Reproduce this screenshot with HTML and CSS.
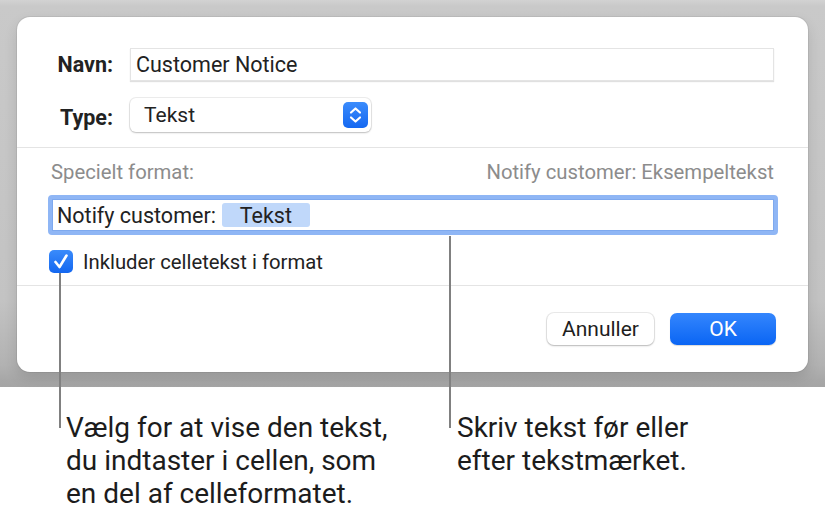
FILE: index.html
```html
<!DOCTYPE html>
<html lang="da">
<head>
<meta charset="utf-8">
<title>Celleformat</title>
<link rel="stylesheet" href="styles.css">
</head>
<body>
<div class="stage">
  <div class="dialog">
    <div class="top">
      <span class="lbl">Navn:</span>
      <div class="input">Customer Notice</div>
      <span class="lbl lbl-type">Type:</span>
      <div class="popup">
        <span>Tekst</span>
        <span class="stepper">
          <svg width="25" height="26" viewBox="0 0 25 26"><path d="M8 10.5 L12.5 6.5 L17 10.5 M8 15.5 L12.5 19.5 L17 15.5" fill="none" stroke="#fff" stroke-width="2.2" stroke-linecap="round" stroke-linejoin="round"/></svg>
        </span>
      </div>
    </div>
    <div class="mid">
      <div class="fmt-head"><span>Specielt format:</span><span>Notify customer: Eksempeltekst</span></div>
      <div class="fmt-field">Notify customer:<span class="token">Tekst</span></div>
      <div class="check">
        <span class="box"><svg width="24" height="23" viewBox="0 0 24 23"><path d="M6.5 12 L10.5 17 L17.5 5.5" fill="none" stroke="#fff" stroke-width="2.6" stroke-linecap="round" stroke-linejoin="round"/></svg></span>
        <span>Inkluder celletekst i format</span>
      </div>
    </div>
    <div class="bottom">
      <button class="btn">Annuller</button>
      <button class="btn primary">OK</button>
    </div>
  </div>
</div>
<div class="captions">
  <p class="cap cap-left">Vælg for at vise den tekst,<br>du indtaster i cellen, som<br>en del af celleformatet.</p>
  <p class="cap cap-right">Skriv tekst før eller<br>efter tekstmærket.</p>
</div>
<div class="leader leader-left"></div>
<div class="leader leader-right"></div>
</body>
</html>
```

FILE: styles.css
```css
html, body {
  margin: 0;
}
body {
  width: 825px;
  height: 519px;
  background: #fff;
  font-family: Roboto, "Liberation Sans", sans-serif;
  color: #1e1e1e;
  position: relative;
  overflow: hidden;
}
.stage {
  height: 387px;
  box-sizing: border-box;
  padding: 17px 17px 0;
  background: linear-gradient(to bottom, #d2d2d2 0px, #c9c9c9 6px, #c3c3c3 300px, #b2b2b2 365px, #a7a7a7 380px, #a5a5a5 387px);
}
.dialog {
  width: 791px;
  height: 355px;
  background: #fff;
  border-radius: 13px;
  box-shadow: 0 0 0 1px rgba(0,0,0,0.06), 0 6px 14px rgba(0,0,0,0.12);
  display: flex;
  flex-direction: column;
  overflow: hidden;
}
.top {
  display: grid;
  grid-template-columns: 56px 1fr;
  column-gap: 17px;
  row-gap: 17px;
  padding: 31px 34px 15px 40px;
  border-bottom: 1px solid #e4e4e4;
}
.lbl {
  font-weight: 700;
  font-size: 21.5px;
  text-align: right;
  align-self: center;
  color: #222;
  white-space: nowrap;
}
.lbl-type {
  padding-top: 5px;
}
.input {
  height: 33px;
  box-sizing: border-box;
  border: 1px solid #e4e4e4;
  box-shadow: 0 1px 1px rgba(0,0,0,0.12);
  padding-left: 5px;
  display: flex;
  align-items: center;
  font-size: 21.5px;
  color: #222;
}
.popup {
  width: 241px;
  height: 34px;
  box-sizing: border-box;
  border-radius: 6px;
  box-shadow: 0 0 0 1px rgba(0,0,0,0.07), 0 1px 2px rgba(0,0,0,0.2);
  display: flex;
  align-items: center;
  justify-content: space-between;
  padding: 0 3px 0 14px;
  font-size: 21px;
  color: #222;
}
.stepper {
  width: 25px;
  height: 26px;
  border-radius: 5px;
  background: linear-gradient(to bottom, #3b8cfc, #1468f1);
  display: flex;
}
.mid {
  padding: 12px 30px 12px 31px;
  border-bottom: 1px solid #e4e4e4;
}
.fmt-head {
  display: flex;
  justify-content: space-between;
  padding: 0 4px 0 3px;
  line-height: 24px;
  font-size: 20.3px;
  color: #8c8c8c;
}
.fmt-field {
  margin-top: 11px;
  height: 40px;
  box-sizing: border-box;
  border: 4px solid #8fb6f5;
  border-radius: 4px;
  box-shadow: inset 0 0 0 1px #7ea9ee;
  display: flex;
  align-items: center;
  padding-left: 5px;
  font-size: 21.5px;
  color: #222;
}
.token {
  margin-left: 6px;
  width: 88px;
  height: 24px;
  border-radius: 3px;
  background: #c0d8fa;
  display: flex;
  align-items: center;
  justify-content: center;
}
.check {
  margin-top: 15px;
  height: 23px;
  display: flex;
  align-items: center;
  gap: 10px;
  font-size: 20.3px;
  color: #222;
}
.box {
  margin-left: 1px;
  width: 24px;
  height: 23px;
  border-radius: 5px;
  background: linear-gradient(to bottom, #3a8bfb, #1367f0);
  display: flex;
}
.bottom {
  flex: 1;
  display: flex;
  justify-content: flex-end;
  align-items: flex-start;
  gap: 16px;
  padding: 27px 32px 0 0;
}
.btn {
  width: 107px;
  height: 32px;
  border: none;
  border-radius: 7px;
  background: #fff;
  box-shadow: 0 0 0 1px rgba(0,0,0,0.08), 0 1px 2px rgba(0,0,0,0.22);
  font-family: Roboto, "Liberation Sans", sans-serif;
  font-size: 21px;
  color: #1e1e1e;
  padding: 0;
}
.btn.primary {
  width: 106px;
  background: linear-gradient(to bottom, #3486fd, #0a65f4);
  color: #fff;
  box-shadow: 0 1px 1px rgba(0,0,0,0.15);
}
.captions {
  display: flex;
  padding: 24px 0 0 66px;
}
.cap {
  margin: 0;
  font-size: 28px;
  line-height: 33px;
  color: #1c1c1c;
  white-space: nowrap;
}
.cap-left {
  width: 391px;
}
.leader {
  position: absolute;
  width: 2px;
  background: #808080;
}
.leader-left {
  left: 59px;
  top: 273px;
  height: 155px;
}
.leader-right {
  left: 449px;
  top: 236px;
  height: 192px;
}
```
